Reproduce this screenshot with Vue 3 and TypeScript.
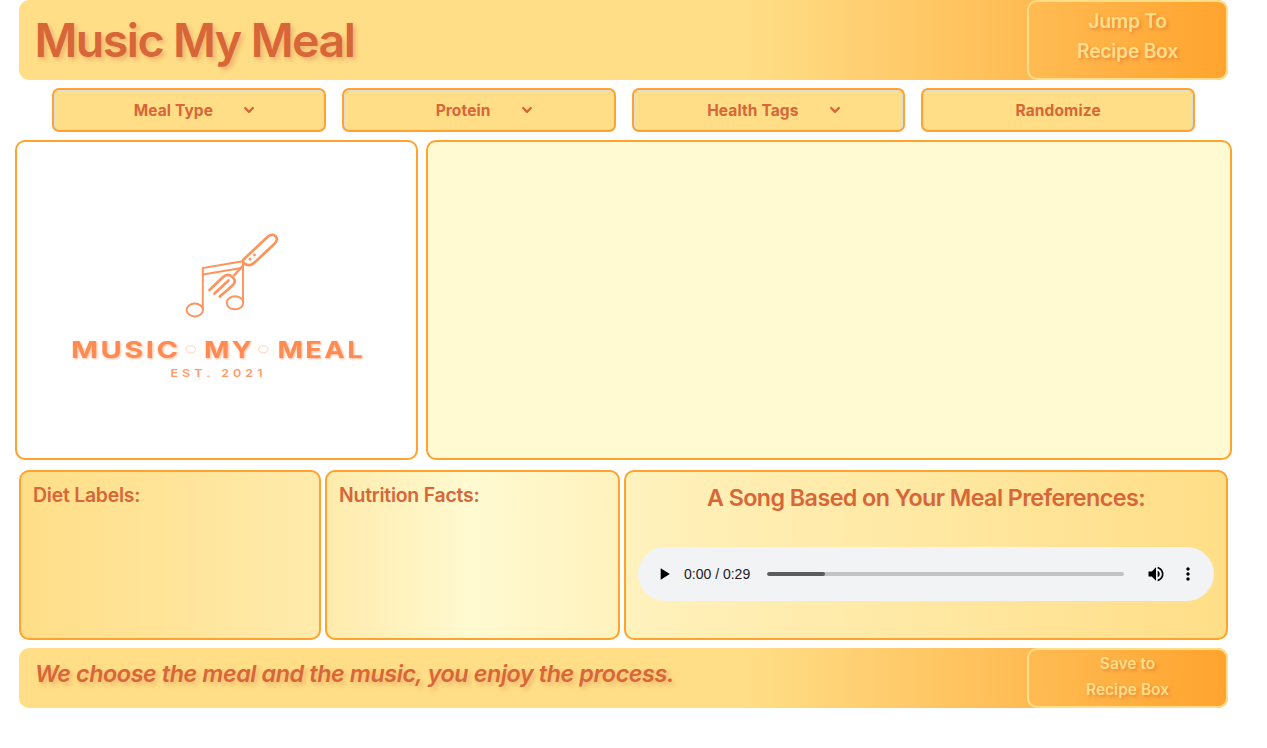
<script setup lang="ts">
interface Filter {
  label: string
  expandable: boolean
}

const filters: Filter[] = [
  { label: 'Meal Type', expandable: true },
  { label: 'Protein', expandable: true },
  { label: 'Health Tags', expandable: true },
  { label: 'Randomize', expandable: false },
]
</script>

<template>
  <div class="page">
    <header class="banner header">
      <h1 class="title">Music My Meal</h1>
      <button class="box-button jump">Jump To<br />Recipe Box</button>
    </header>

    <nav class="filters">
      <button v-for="f in filters" :key="f.label" class="filter" :class="{ expandable: f.expandable }">
        <span>{{ f.label }}</span>
        <svg v-if="f.expandable" class="chevron" width="12" height="8" viewBox="0 0 12 8">
          <path d="M2.200 2L6 5.800L9.800 2" fill="none" stroke="#d76638" stroke-width="2.400" stroke-linecap="round" stroke-linejoin="round" />
        </svg>
      </button>
    </nav>

    <main class="meal">
      <section class="logo-card">
        <svg class="logo" width="399" height="316" viewBox="17 142 399 316">
          <g fill="none" stroke="#ff935d" stroke-width="1.9">
            <ellipse cx="194.800" cy="310" rx="8.200" ry="6.500" />
            <ellipse cx="235" cy="302.800" rx="8.300" ry="6.500" />
            <path d="M202.800 310V268L243 261.200V302" />
            <path d="M203 274.500L241.500 268" />
            <path stroke-width="2.700" d="M243.500 259.500L268 236.500C274 231.500 280.500 238.500 274.500 243.800L254 263C251.500 265.500 248.500 265.800 245.500 264.300C243 263 242.300 261 243.500 259.500Z" />
            <path stroke-width="2.500" d="M243.500 265L233.500 276" />
            <path stroke-width="2.700" stroke-linecap="round" d="M209.500 290L222.500 277.500C226.500 273.800 230 274.500 232.500 277C235.500 280 235.800 282.500 232 286L219.800 296.500M214.500 293.500L228.500 280.500" />
          </g>
          <circle cx="250" cy="259.200" r="1.400" fill="#ff935d" />
          <circle cx="254.500" cy="255" r="1.400" fill="#ff935d" />
          <g class="wordmark" fill="#ff8b52">
            <text x="71" y="358" textLength="109.500" lengthAdjust="spacingAndGlyphs">MUSIC</text>
            <text x="204" y="358" textLength="50" lengthAdjust="spacingAndGlyphs">MY</text>
            <text x="277.500" y="358" textLength="87.500" lengthAdjust="spacingAndGlyphs">MEAL</text>
          </g>
          <g fill="none" stroke="#ffc7aa" stroke-width="0.800">
            <ellipse cx="190.800" cy="349.300" rx="4.700" ry="3.700" />
            <ellipse cx="263.200" cy="349.300" rx="4.700" ry="3.700" />
          </g>
          <text class="established" x="170.500" y="377" textLength="96" lengthAdjust="spacingAndGlyphs" fill="#ff9b68">EST. 2021</text>
        </svg>
      </section>
      <section class="recipe"></section>
    </main>

    <section class="details">
      <article class="panel diet"><h2>Diet Labels:</h2></article>
      <article class="panel nutrition"><h2>Nutrition Facts:</h2></article>
      <article class="panel song">
        <h2>A Song Based on Your Meal Preferences:</h2>
        <div class="player">
          <svg class="play" width="20" height="20" viewBox="0 0 24 24"><path d="M8 5v14l11-7z" /></svg>
          <span class="time">0:00 / 0:29</span>
          <div class="track"><div class="buffered"></div></div>
          <svg class="volume" width="20" height="20" viewBox="0 0 24 24"><path d="M3 9v6h4l5 5V4L7 9H3zm13.500 3c0-1.770-1.020-3.290-2.500-4.030v8.050c1.480-.730 2.500-2.250 2.500-4.020zM14 3.230v2.060c2.890.860 5 3.540 5 6.710s-2.110 5.850-5 6.710v2.060c4.010-.910 7-4.490 7-8.770s-2.990-7.860-7-8.770z" /></svg>
          <svg class="more" width="20" height="20" viewBox="0 0 24 24"><path d="M12 8c1.100 0 2-.9 2-2s-.9-2-2-2-2 .9-2 2 .9 2 2 2zm0 2c-1.100 0-2 .9-2 2s.9 2 2 2 2-.9 2-2-.9-2-2-2zm0 6c-1.100 0-2 .9-2 2s.9 2 2 2 2-.9 2-2-.9-2-2-2z" /></svg>
        </div>
      </article>
    </section>

    <footer class="banner footer">
      <p class="tagline">We choose the meal and the music, you enjoy the process.</p>
      <button class="box-button save">Save to<br />Recipe Box</button>
    </footer>
  </div>
</template>

<style>
body {
  margin: 0;
  background: #fff;
}
</style>

<style scoped>
.page {
  box-sizing: border-box;
  width: 1247px;
  height: 748px;
  padding: 0 19px;
  font-family: Inter, 'Liberation Sans', sans-serif;
  color: #d76638;
}
.page *,
.page *::before {
  box-sizing: border-box;
}
h1,
h2,
p {
  margin: 0;
}
button {
  margin: 0;
  padding: 0;
  font-family: inherit;
}
.banner {
  display: flex;
  justify-content: space-between;
  border-radius: 10px;
  background: linear-gradient(90deg, #ffde87 60%, #ffa32e);
}
.header {
  height: 80px;
}
.title {
  padding-left: 15.5px;
  font-size: 46.5px;
  line-height: 80px;
  font-weight: 600;
  letter-spacing: -1.55px;
  text-shadow: 3px 3px 4px rgba(215, 102, 56, 0.35);
}
.box-button {
  width: 201px;
  border: 2px solid #ffde87;
  border-radius: 10px;
  background: transparent;
  color: #ffde87;
  text-shadow: 2px 2px 3px rgba(215, 102, 56, 0.5);
}
.jump {
  padding-bottom: 8px;
  font-size: 19.4px;
  line-height: 30px;
  font-weight: 600;
  letter-spacing: -0.3px;
}
.filters {
  display: grid;
  grid-template-columns: repeat(4, minmax(0, 1fr));
  gap: 16px;
  padding: 8px 33px;
}
.filter {
  display: flex;
  align-items: center;
  justify-content: center;
  gap: 30px;
  height: 44px;
  border: 2px solid #ffa32e;
  border-radius: 7px;
  background: #ffde87;
  box-shadow: inset 0 0 0 1px #dbdbdb;
  color: #d76638;
  font-size: 15.5px;
  font-weight: 700;
  letter-spacing: 0.12px;
}
.filter.expandable {
  padding-left: 11px;
}
.meal {
  display: flex;
  gap: 8px;
  height: 320px;
  margin: 0 -4px;
}
.logo-card,
.recipe {
  border: 2px solid #ffa32e;
  border-radius: 10px;
}
.logo-card {
  width: 403px;
  background: #fff;
}
.logo {
  display: block;
}
.wordmark {
  font-family: Inter, sans-serif;
  font-size: 23px;
  font-weight: 700;
  letter-spacing: 2px;
  filter: drop-shadow(1px 1px 1px rgba(255, 139, 82, 0.6));
}
.established {
  font-family: Inter, sans-serif;
  font-size: 10.5px;
  font-weight: 600;
  letter-spacing: 3.4px;
}
.recipe {
  flex: 1;
  background: #fffad1;
}
.details {
  display: flex;
  gap: 4px;
  height: 170px;
  margin: 10px 0 8px;
}
.panel {
  padding: 10px 12px;
  border: 2px solid #ffa32e;
  border-radius: 10px;
}
.panel h2 {
  font-size: 19.4px;
  line-height: 27px;
  font-weight: 600;
  letter-spacing: -0.22px;
}
.diet {
  width: 302px;
  background: linear-gradient(90deg, #ffde87, #ffebac);
}
.nutrition {
  width: 295px;
  background: linear-gradient(90deg, #ffebac, #fffad1 50%, #fff2bd);
}
.song {
  flex: 1;
  background: linear-gradient(90deg, #fff2bd, #ffde87);
}
.panel.song h2 {
  font-size: 23.3px;
  line-height: 32px;
  letter-spacing: -0.57px;
  text-align: center;
}
.player {
  display: flex;
  align-items: center;
  height: 54px;
  margin-top: 33px;
  padding: 0 16px;
  border-radius: 27px;
  background: #f1f3f4;
}
.time {
  width: 67px;
  margin: 0 16px 0 10px;
  color: #202124;
  font-family: 'Liberation Sans', Arial, sans-serif;
  font-size: 14px;
  white-space: nowrap;
}
.track {
  flex: 1;
  height: 4px;
  overflow: hidden;
  border-radius: 2px;
  background: #c1c2c3;
}
.buffered {
  width: 58px;
  height: 4px;
  border-radius: 2px;
  background: #5b5c5c;
}
.volume {
  margin: 0 12px 0 22px;
}
.footer {
  height: 60px;
}
.tagline {
  padding: 10px 0 0 16px;
  font-size: 23.3px;
  line-height: 32px;
  font-style: italic;
  font-weight: 600;
  letter-spacing: -0.38px;
  text-shadow: 3px 3px 4px rgba(215, 102, 56, 0.35);
}
.save {
  padding-bottom: 2px;
  font-size: 15.5px;
  line-height: 26px;
  font-weight: 600;
}
</style>
